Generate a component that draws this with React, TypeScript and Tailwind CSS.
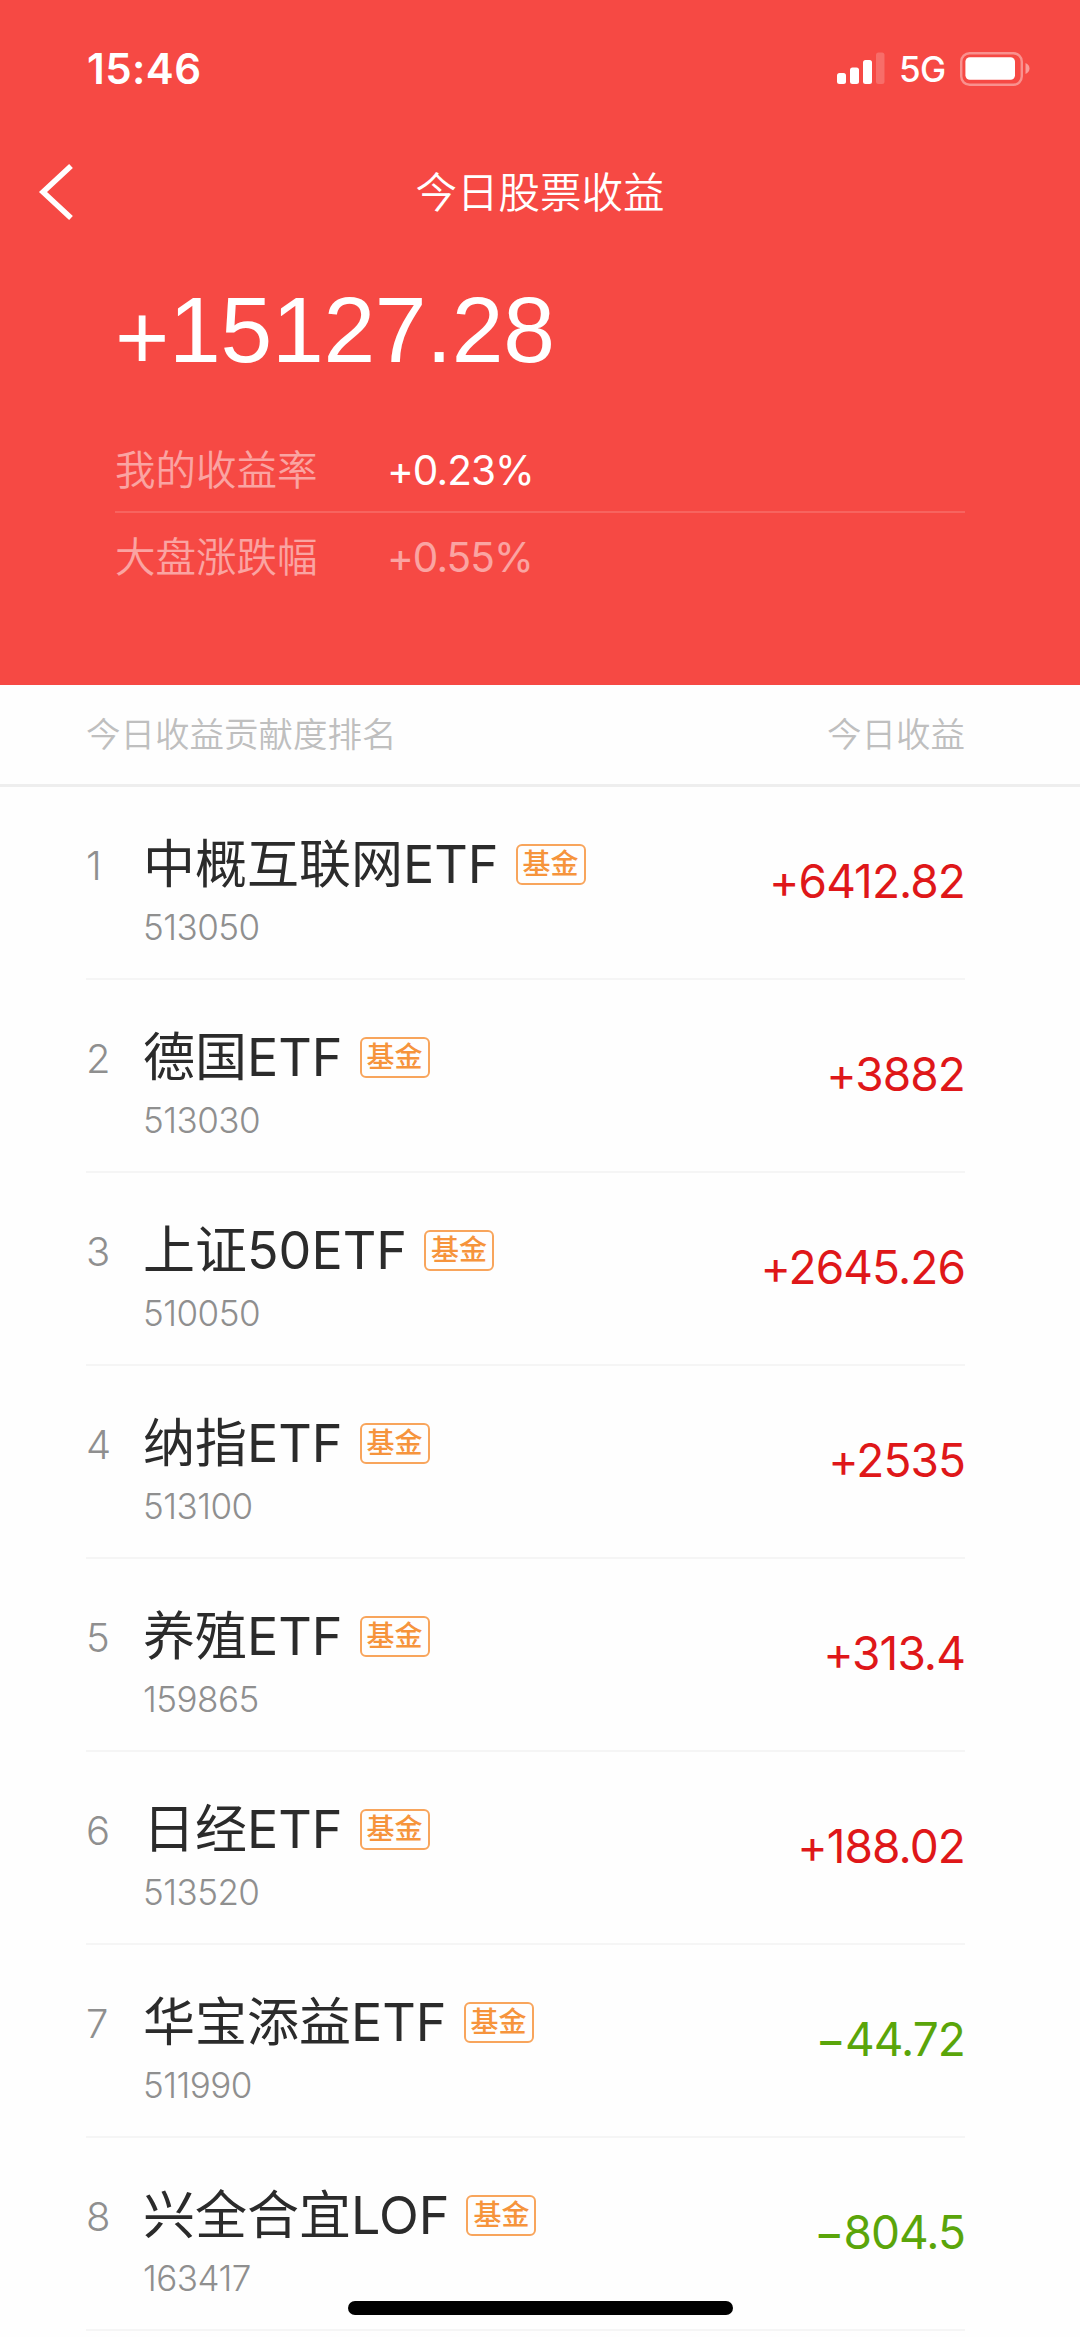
type Holding = {
  name: string
  code: string
  profit: string
}

const holdings: Holding[] = [
  { name: '中概互联网ETF', code: '513050', profit: '+6412.82' },
  { name: '德国ETF', code: '513030', profit: '+3882' },
  { name: '上证50ETF', code: '510050', profit: '+2645.26' },
  { name: '纳指ETF', code: '513100', profit: '+2535' },
  { name: '养殖ETF', code: '159865', profit: '+313.4' },
  { name: '日经ETF', code: '513520', profit: '+188.02' },
  { name: '华宝添益ETF', code: '511990', profit: '−44.72' },
  { name: '兴全合宜LOF', code: '163417', profit: '−804.5' },
]

const StatusBar = () => (
  <div className="flex h-[138px] items-start justify-between pl-[87px] pr-[50px] text-white">
    <span className="mt-[43px] text-[42px] font-semibold leading-[52px] tracking-[0.01em]">15:46</span>
    <div className="mt-[48px] flex h-10 items-center">
      <svg className="h-10 w-12" viewBox="0 0 48 40" fill="currentColor">
        <rect x="0" y="25" width="9" height="11" rx="2.5" />
        <rect x="13" y="19.5" width="9" height="16.5" rx="2.5" />
        <rect x="26" y="12" width="9" height="24" rx="2.5" />
        <rect x="39" y="4.5" width="8.5" height="31.5" rx="2.5" opacity="0.2" />
      </svg>
      <span className="ml-[14px] w-[46px] whitespace-nowrap pt-px text-[35px] font-medium leading-10 tracking-[-0.02em]">5G</span>
      <svg className="ml-[15px] h-10 w-[70px]" viewBox="0 0 70 40" fill="currentColor">
        <rect x="1.2" y="5.2" width="60.6" height="31.6" rx="8.5" fill="none" stroke="currentColor" strokeWidth="2.4" opacity="0.4" />
        <rect x="5.4" y="9.2" width="49.6" height="22.6" rx="4.5" />
        <path d="M65.5 15c2.600 1 4 3 4 5.500s-1.400 4.500-4 5.500z" opacity="0.45" />
      </svg>
    </div>
  </div>
)

const Summary = () => (
  <header className="h-[685px] bg-[#f64944] text-white">
    <StatusBar />
    <div className="grid h-[108px] grid-cols-[120px_1fr_120px] items-center">
      <svg className="ml-[38px] h-[60px] w-10" viewBox="0 0 40 60" fill="none" stroke="currentColor" strokeWidth="5.5">
        <path d="M33 4 5 30l28 26" />
      </svg>
      <h1 className="pt-0.5 text-center text-[41.500px] font-[350] leading-[60px]">今日股票收益</h1>
    </div>
    <div className="px-[115px]">
      <p className="mt-[30px] font-['Liberation_Sans',Arial,sans-serif] text-[93px] leading-[108px] tracking-[-0.003em]">
        <span className="align-[-7px] leading-none">+</span>15127.28
      </p>
      <div className="mt-[44px] flex h-[85px] items-center border-b-2 border-white/15 pt-1 text-[40.500px]">
        <span className="w-[272px] font-[350] opacity-50">我的收益率</span>
        <span className="font-normal tracking-[-0.023em] [font-feature-settings:'calt'_0]">+0.23%</span>
      </div>
      <div className="flex h-[87px] items-center pt-1 text-[40.500px] opacity-50">
        <span className="w-[272px] font-[350]">大盘涨跌幅</span>
        <span className="font-normal tracking-[-0.023em] [font-feature-settings:'calt'_0]">+0.55%</span>
      </div>
    </div>
  </header>
)

const HoldingRow = ({ item, rank }: { item: Holding; rank: number }) => (
  <li className="flex h-[193px] border-b-2 border-[#f5f5f5]">
    <span className="mt-[47px] w-[57px] shrink-0 text-[40px] font-light leading-[64px] text-[#8f8f8f]">{rank}</span>
    <div className="flex-1">
      <div className="mt-[42px] flex h-[70px] items-center">
        <span className="whitespace-nowrap pt-0.5 text-[52px] leading-[70px] text-[#2b2b2b]">{item.name}</span>
        <span className="ml-[17px] flex h-[41px] w-[70px] items-center justify-center rounded-md border-2 border-[#f8a55c] text-[28px] font-medium leading-none text-[#f6943c]">
          基金
        </span>
      </div>
      <p className="mt-[6px] text-[35px] font-light leading-[44px] tracking-[-0.015em] text-[#8f8f8f]">{item.code}</p>
    </div>
    <span
      className={`mt-[62px] text-[46px] leading-[64px] tracking-[-0.02em] [font-feature-settings:'calt'_0] ${item.profit.startsWith('+') ? 'text-[#df1719]' : 'text-[#5aa50a]'}`}
    >
      {item.profit}
    </span>
  </li>
)

const App = () => (
  <div className="relative h-[2337px] w-[1080px] overflow-hidden bg-[#fefefe] font-['Inter','Noto_Sans_CJK_SC',sans-serif]">
    <Summary />
    <div className="flex h-[102px] items-center justify-between border-b-[3px] border-[#eee] pl-[86px] pr-[115px] pt-px text-[34.500px] font-[350] text-[#bfbfbf]">
      <span>今日收益贡献度排名</span>
      <span>今日收益</span>
    </div>
    <ul className="pl-[86px] pr-[115px]">
      {holdings.map((item, index) => (
        <HoldingRow key={item.code} item={item} rank={index + 1} />
      ))}
    </ul>
    {/* home indicator floats over the list */}
    <div className="absolute bottom-[22px] left-[348px] h-[14px] w-[385px] rounded-full bg-black" />
  </div>
)

export default App
